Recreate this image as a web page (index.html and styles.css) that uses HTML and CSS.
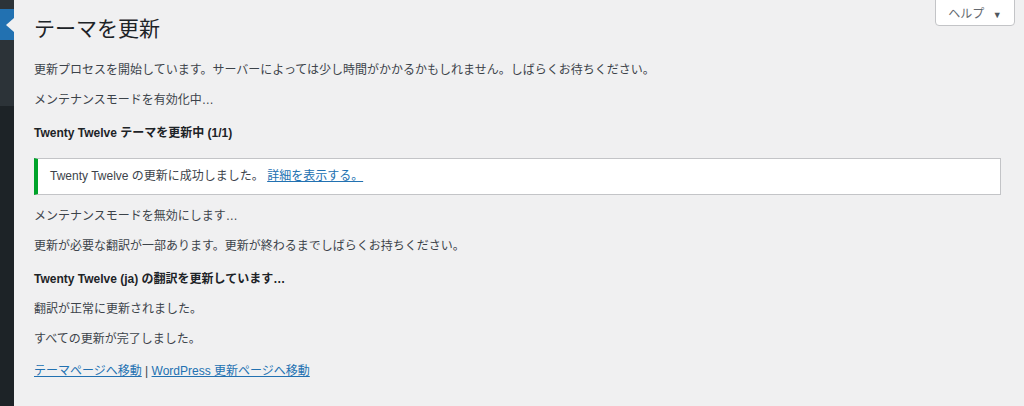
FILE: index.html
```html
<!DOCTYPE html>
<html lang="ja">
<head>
  <meta charset="UTF-8" />
  <title>テーマを更新</title>
  <link rel="stylesheet" href="styles.css">
</head>
<body>
  <div class="admin">
    <div class="sidebar">
      <div class="menu-top"></div>
      <div class="menu-current"><span class="arrow"></span></div>
      <div class="submenu"></div>
    </div>

    <div class="content">
      <button class="help">ヘルプ <span class="caret">▼</span></button>

      <h1>テーマを更新</h1>
      <p>更新プロセスを開始しています。サーバーによっては少し時間がかかるかもしれません。しばらくお待ちください。</p>
      <p>メンテナンスモードを有効化中…</p>
      <h2>Twenty Twelve テーマを更新中 (1/1)</h2>
      <div class="notice">
        Twenty Twelve の更新に成功しました。 <a href="#">詳細を表示する。</a>
      </div>
      <p>メンテナンスモードを無効にします…</p>
      <p>更新が必要な翻訳が一部あります。更新が終わるまでしばらくお持ちください。</p>
      <h2>Twenty Twelve (ja) の翻訳を更新しています…</h2>
      <p>翻訳が正常に更新されました。</p>
      <p>すべての更新が完了しました。</p>
      <p class="links"><a href="#">テーマページへ移動</a> | <a href="#">WordPress 更新ページへ移動</a></p>
    </div>
  </div>
</body>
</html>
```

FILE: styles.css
```css
body {
  margin: 0;
  background: #f0f0f1;
  font-family: "Liberation Sans", "Noto Sans CJK JP", sans-serif;
  font-size: 12px;
  color: #3c434a;
}
.admin {
  display: flex;
  min-height: 406px;
}
.sidebar {
  width: 14px;
  flex-shrink: 0;
  background: #1d2327;
  display: flex;
  flex-direction: column;
}
.menu-top {
  height: 9px;
  background: #2c3338;
}
.menu-current {
  height: 31px;
  background: #2271b1;
  display: flex;
  align-items: center;
  justify-content: flex-end;
}
.arrow {
  width: 0;
  height: 0;
  border-top: 7px solid transparent;
  border-bottom: 7px solid transparent;
  border-right: 8px solid #f0f0f1;
}
.submenu {
  height: 66px;
  background: #2c3338;
}
.content {
  position: relative;
  flex: 1;
  padding: 14px 23px 20px 20px;
}
.help {
  position: absolute;
  top: -1px;
  right: 9px;
  width: 80px;
  height: 27px;
  background: #fff;
  border: 1px solid #c3c4c7;
  border-radius: 0 0 4px 4px;
  font-family: inherit;
  font-size: 12px;
  color: #646970;
  padding: 0;
}
.caret {
  font-size: 9px;
  margin-left: 5px;
  color: #50575e;
}
h1 {
  font-size: 21px;
  font-weight: 400;
  line-height: 30px;
  margin: 0 0 16px;
  color: #1d2327;
}
p {
  line-height: 20px;
  margin: 10px 0;
}
h2 {
  font-size: 12px;
  font-weight: 600;
  line-height: 20px;
  margin: 13px 0 10px;
  color: #1d2327;
}
.notice {
  background: #fff;
  border: 1px solid #c3c4c7;
  border-left: 4px solid #00a32a;
  padding: 8px 12px;
  line-height: 19px;
  margin: 15px 0 11px;
}
a {
  color: #2271b1;
}
.links {
  margin-top: 12px;
}
```
